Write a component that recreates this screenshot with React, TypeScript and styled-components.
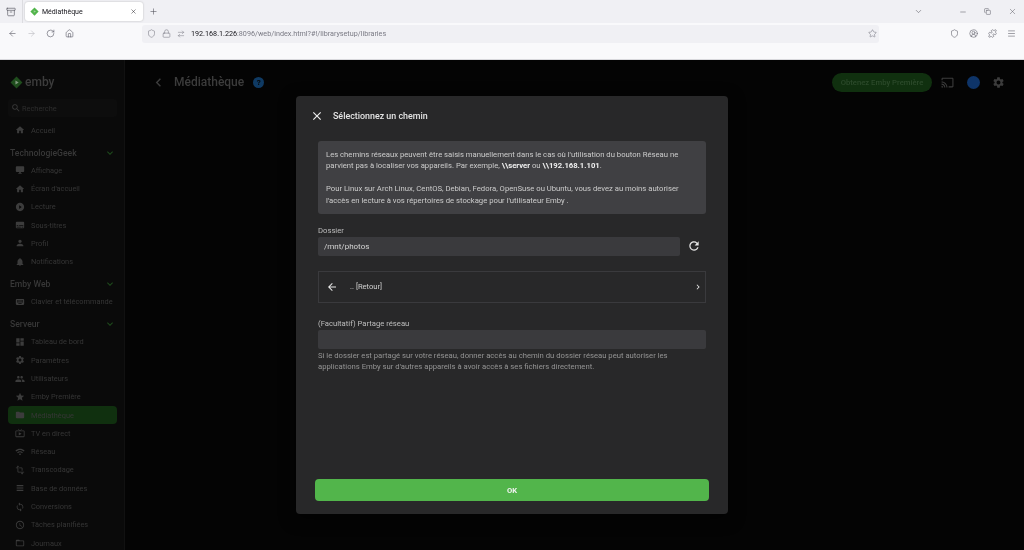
import styled, { createGlobalStyle } from "styled-components";
import {
  Archive, ArrowLeft, ArrowRight, RotateCw, Home, Shield, Lock, ArrowRightLeft, Star, Plus, X,
  ChevronDown, Minus, Copy, CircleUserRound, Puzzle, Menu,
} from "lucide-react";
import {
  MdHome, MdDesktopWindows, MdPlayCircleFilled, MdSubtitles, MdPerson, MdNotifications, MdKeyboard,
  MdDashboard, MdSettings, MdPeople, MdStar, MdFolder, MdLiveTv, MdWifi, MdTransform, MdViewHeadline,
  MdSync, MdSchedule, MdFolderOpen, MdCast, MdSearch, MdChevronLeft, MdChevronRight, MdClose,
  MdRefresh, MdArrowBack, MdKeyboardArrowDown,
} from "react-icons/md";
import type { IconType } from "react-icons";

const Global = createGlobalStyle`
  html, body { margin: 0; height: 100%; overflow: hidden; background: #050505; }
  #root { height: 100%; }
  * { box-sizing: border-box; }
`;

const Page = styled.div`
  position: relative;
  width: 1024px;
  height: 550px;
  display: flex;
  flex-direction: column;
  font-family: Roboto, "Liberation Sans", sans-serif;
  overflow: hidden;
  filter: blur(0.3px);
`;

/* browser chrome */
const TabStrip = styled.div`
  height: 23px;
  background: #f0f0f4;
  display: flex;
  align-items: center;
  color: #50505a;
`;

const TabViews = styled.div`
  width: 23px;
  height: 23px;
  display: flex;
  align-items: center;
  justify-content: center;
  border-right: 1px solid #dcdce0;
`;

const ActiveTab = styled.div`
  width: 118px;
  height: 19px;
  margin-left: 2px;
  padding: 0 6px 0 5px;
  background: #fff;
  border-radius: 3px;
  box-shadow: 0 0 2px rgba(0, 0, 0, 0.25);
  display: flex;
  align-items: center;
  gap: 3px;
  font-size: 7px;
  color: #15141a;
`;

const TabLogo = styled.span`
  display: flex;
  color: #52b54b;
`;

const TabTitle = styled.span`
  flex: 1;
`;

const NewTab = styled.div`
  margin-left: 6px;
  display: flex;
`;

const WindowControls = styled.div`
  margin-left: auto;
  display: flex;
  align-items: center;
  gap: 17px;
  padding-right: 7px;
`;

const ListTabs = styled.div`
  display: flex;
  margin-right: 19px;
`;

const NavBar = styled.div`
  height: 21px;
  background: #f9f9fb;
  display: flex;
  align-items: center;
  padding-left: 8px;
  color: #5b5b66;
`;

const NavButtons = styled.div`
  width: 134px;
  display: flex;
  align-items: center;
  gap: 10px;
`;

const NavIcon = styled.span<{ $off?: boolean }>`
  display: flex;
  opacity: ${({ $off }) => ($off ? 0.4 : 1)};
`;

const UrlBar = styled.div`
  width: 737px;
  height: 18px;
  background: #f0f0f4;
  border-radius: 3px;
  display: flex;
  align-items: center;
  padding: 0 2px 0 5px;
  gap: 6px;
  font-size: 7.2px;
  color: #7a7a84;
`;

const UrlText = styled.span`
  flex: 1;
  white-space: nowrap;
`;

const UrlHost = styled.span`
  color: #15141a;
`;

const NavExtras = styled.div`
  margin-left: auto;
  display: flex;
  align-items: center;
  gap: 10px;
  padding-right: 8px;
`;

const BookmarksBar = styled.div`
  height: 16px;
  background: #f9f9fb;
  border-bottom: 1px solid #d8d8dc;
`;

/* emby page, dimmed behind the dialog */
const Body = styled.div`
  flex: 1;
  min-height: 0;
  display: flex;
  background: #040404;
`;

const Sidebar = styled.aside`
  width: 125px;
  background: #0a0a0a;
  border-right: 1px solid #111;
  padding: 0 7px 0 8px;
  overflow: hidden;
  flex-shrink: 0;
`;

const Brand = styled.div`
  height: 22px;
  margin-top: 11px;
  padding-left: 2px;
  display: flex;
  align-items: center;
  gap: 2px;
  font-size: 12px;
  font-weight: 500;
  color: #3c3c3c;
`;

const BrandMark = styled.span`
  display: flex;
  color: #1f4d1d;
`;

const SearchBox = styled.div`
  height: 18px;
  margin: 6px 0 4px;
  border-radius: 3px;
  background: #0d0d0d;
  display: flex;
  align-items: center;
  gap: 1px;
  padding-left: 3px;
  font-size: 7.4px;
  color: #2e2e2e;
`;

const NavRow = styled.div<{ $active?: boolean }>`
  height: 18.3px;
  display: flex;
  align-items: center;
  gap: 6px;
  padding-left: 7px;
  font-size: 7.4px;
  color: #363636;
  border-radius: 4px;
  white-space: nowrap;
  background: ${({ $active }) => ($active ? "#10300f" : "transparent")};
`;

const Section = styled.div`
  height: 14px;
  margin-top: 6.5px;
  margin-bottom: 1.3px;
  padding: 0 1px 0 2px;
  display: flex;
  align-items: center;
  justify-content: space-between;
  font-size: 8.6px;
  font-weight: 500;
  color: #383838;
  white-space: nowrap;
`;

const SectionChevron = styled.span`
  display: flex;
  color: #1e4a1c;
`;

const Main = styled.main`
  flex: 1;
  min-width: 0;
`;

const Header = styled.header`
  height: 44px;
  display: flex;
  align-items: center;
  padding: 0 19px 0 25px;
  color: #3c3c3c;
`;

const PageTitle = styled.h1`
  margin: 0 0 0 7px;
  font-size: 12px;
  font-weight: 500;
  color: #3c3c3c;
`;

const HelpBadge = styled.span`
  width: 11px;
  height: 11px;
  margin-left: 9px;
  border-radius: 50%;
  background: #0f3a63;
  color: #050505;
  font-size: 8px;
  font-weight: 700;
  display: flex;
  align-items: center;
  justify-content: center;
`;

const HeaderEnd = styled.div`
  margin-left: auto;
  display: flex;
  align-items: center;
  gap: 10px;
`;

const Premium = styled.div`
  height: 19px;
  width: 100px;
  border-radius: 10px;
  background: #10300f;
  color: #2c4a2b;
  font-size: 7.7px;
  font-weight: 500;
  display: flex;
  align-items: center;
  justify-content: center;
  margin-right: -1px;
`;

const Avatar = styled.span`
  width: 13px;
  height: 13px;
  border-radius: 50%;
  background: #0e3468;
  margin: 0 2px 0 3px;
`;

/* dialog */
const Dialog = styled.section`
  position: absolute;
  left: 296px;
  top: 96px;
  width: 432px;
  height: 418px;
  background: #282829;
  border-radius: 4px;
  box-shadow: 0 4px 16px rgba(0, 0, 0, 0.6);
  display: flex;
  flex-direction: column;
  padding: 0 22px 13px;
  color: #d6d6d6;
  font-size: 7.6px;
`;

const DialogHeader = styled.div`
  height: 39px;
  display: flex;
  align-items: center;
  gap: 9px;
  margin-left: -8px;
  margin-bottom: 6px;
  color: #eee;
`;

const DialogTitle = styled.h2`
  margin: 0;
  font-size: 8.9px;
  font-weight: 500;
  color: #e4e4e4;
`;

const InfoBox = styled.div`
  flex: 0 0 73px;
  background: #404043;
  border-radius: 3px;
  padding: 7.5px 8px;
  line-height: 11.6px;
  color: #cccccc;
  font-size: 7.7px;
  white-space: nowrap;
`;

const InfoLine = styled.p<{ $gap?: boolean }>`
  margin: ${({ $gap }) => ($gap ? "11.6px 0 0" : "0")};
`;

const InfoStrong = styled.strong`
  color: #efefef;
`;

const Label = styled.div<{ $top: number }>`
  margin-top: ${({ $top }) => $top}px;
  margin-bottom: 1px;
  font-size: 7.7px;
  line-height: 10px;
  color: #bdbdbd;
`;

const PathRow = styled.div`
  display: flex;
  align-items: center;
`;

const Field = styled.div`
  flex: 1 0 19px;
  height: 19px;
  background: #3a3a3d;
  border-radius: 2px;
  padding: 0 6px;
  display: flex;
  align-items: center;
  font-size: 8px;
  color: #d4d4d4;
`;

const ShareField = styled(Field)`
  flex: 0 0 19px;
`;

const RefreshButton = styled.span`
  width: 26px;
  padding-left: 7px;
  display: flex;
  color: #e6e6e6;
`;

const BackRow = styled.div`
  margin-top: 15px;
  flex: 0 0 32px;
  border: 1px solid #3a3a3d;
  display: flex;
  align-items: center;
  padding: 0 2.5px 0 7px;
  color: #e8e8e8;
  font-size: 7.6px;
`;

const BackLabel = styled.span`
  flex: 1;
  margin-left: 12px;
  color: #cfcfcf;
`;

const Hint = styled.p`
  margin: 1px 0 0;
  line-height: 11.6px;
  font-size: 7.7px;
  color: #949494;
  white-space: nowrap;
`;

const OkButton = styled.button`
  margin: auto -3px 0;
  flex: 0 0 22px;
  border: none;
  border-radius: 4px;
  background: #52b54b;
  color: #f2f2f2;
  font-family: inherit;
  font-size: 7.6px;
  font-weight: 700;
`;

type NavItem = { icon: IconType; label: string; active?: boolean };

const tech: NavItem[] = [
  { icon: MdDesktopWindows, label: "Affichage" },
  { icon: MdHome, label: "Écran d'accueil" },
  { icon: MdPlayCircleFilled, label: "Lecture" },
  { icon: MdSubtitles, label: "Sous-titres" },
  { icon: MdPerson, label: "Profil" },
  { icon: MdNotifications, label: "Notifications" },
];

const server: NavItem[] = [
  { icon: MdDashboard, label: "Tableau de bord" },
  { icon: MdSettings, label: "Paramètres" },
  { icon: MdPeople, label: "Utilisateurs" },
  { icon: MdStar, label: "Emby Première" },
  { icon: MdFolder, label: "Médiathèque", active: true },
  { icon: MdLiveTv, label: "TV en direct" },
  { icon: MdWifi, label: "Réseau" },
  { icon: MdTransform, label: "Transcodage" },
  { icon: MdViewHeadline, label: "Base de données" },
  { icon: MdSync, label: "Conversions" },
  { icon: MdSchedule, label: "Tâches planifiées" },
  { icon: MdFolderOpen, label: "Journaux" },
];

function Row({ icon: Icon, label, active }: NavItem) {
  return (
    <NavRow $active={active}>
      <Icon size={10} color="#3c3c3c" />
      {label}
    </NavRow>
  );
}

function EmbyLogo({ size }: { size: number }) {
  return (
    <svg width={size} height={size} viewBox="0 0 24 24">
      <path d="M12 1 23 12 12 23 1 12Z" fill="currentColor" />
      <path d="M10 8.5 16 12 10 15.5Z" fill="#e8e8e8" fillOpacity={0.5} />
    </svg>
  );
}

function SectionTitle({ label }: { label: string }) {
  return (
    <Section>
      {label}
      <SectionChevron>
        <MdKeyboardArrowDown size={12} />
      </SectionChevron>
    </Section>
  );
}

export default function App() {
  return (
    <Page>
      <Global />
      <TabStrip>
        <TabViews>
          <Archive size={10} strokeWidth={1.5} />
        </TabViews>
        <ActiveTab>
          <TabLogo>
            <EmbyLogo size={9} />
          </TabLogo>
          <TabTitle>Médiathèque</TabTitle>
          <X size={7} strokeWidth={1.6} />
        </ActiveTab>
        <NewTab>
          <Plus size={9} strokeWidth={1.5} />
        </NewTab>
        <WindowControls>
          <ListTabs>
            <ChevronDown size={9} strokeWidth={1.4} />
          </ListTabs>
          <Minus size={8} strokeWidth={1.5} />
          <Copy size={7} strokeWidth={1.6} />
          <X size={9} strokeWidth={1.2} />
        </WindowControls>
      </TabStrip>
      <NavBar>
        <NavButtons>
          <NavIcon><ArrowLeft size={9} strokeWidth={1.6} /></NavIcon>
          <NavIcon $off><ArrowRight size={9} strokeWidth={1.6} /></NavIcon>
          <NavIcon><RotateCw size={9} strokeWidth={1.6} /></NavIcon>
          <NavIcon><Home size={9} strokeWidth={1.6} /></NavIcon>
        </NavButtons>
        <UrlBar>
          <Shield size={9} strokeWidth={1.5} />
          <Lock size={9} strokeWidth={1.5} />
          <ArrowRightLeft size={8} strokeWidth={1.5} />
          <UrlText>
            <UrlHost>192.168.1.226</UrlHost>:8096/web/index.html?#!/librarysetup/libraries
          </UrlText>
          <Star size={9} strokeWidth={1.5} />
        </UrlBar>
        <NavExtras>
          <Shield size={9} strokeWidth={1.5} />
          <CircleUserRound size={9} strokeWidth={1.5} />
          <Puzzle size={9} strokeWidth={1.5} />
          <Menu size={9} strokeWidth={1.5} />
        </NavExtras>
      </NavBar>
      <BookmarksBar />
      <Body>
        <Sidebar>
          <Brand>
            <BrandMark>
              <EmbyLogo size={13} />
            </BrandMark>
            emby
          </Brand>
          <SearchBox>
            <MdSearch size={10} color="#3a3a3a" />
            Recherche
          </SearchBox>
          <Row icon={MdHome} label="Accueil" />
          <SectionTitle label="TechnologieGeek" />
          {tech.map((item) => <Row key={item.label} {...item} />)}
          <SectionTitle label="Emby Web" />
          <Row icon={MdKeyboard} label="Clavier et télécommande" />
          <SectionTitle label="Serveur" />
          {server.map((item) => <Row key={item.label} {...item} />)}
        </Sidebar>
        <Main>
          <Header>
            <MdChevronLeft size={17} />
            <PageTitle>Médiathèque</PageTitle>
            <HelpBadge>?</HelpBadge>
            <HeaderEnd>
              <Premium>Obtenez Emby Première</Premium>
              <MdCast size={13} />
              <Avatar />
              <MdSettings size={13} />
            </HeaderEnd>
          </Header>
        </Main>
      </Body>
      <Dialog>
        <DialogHeader>
          <MdClose size={14} />
          <DialogTitle>Sélectionnez un chemin</DialogTitle>
        </DialogHeader>
        <InfoBox>
          <InfoLine>Les chemins réseaux peuvent être saisis manuellement dans le cas où l'utilisation du bouton Réseau ne</InfoLine>
          <InfoLine>
            parvient pas à localiser vos appareils. Par exemple, <InfoStrong>\\server</InfoStrong> ou <InfoStrong>\\192.168.1.101</InfoStrong>.
          </InfoLine>
          <InfoLine $gap>Pour Linux sur Arch Linux, CentOS, Debian, Fedora, OpenSuse ou Ubuntu, vous devez au moins autoriser</InfoLine>
          <InfoLine>l'accès en lecture à vos répertoires de stockage pour l'utilisateur Emby .</InfoLine>
        </InfoBox>
        <Label $top={11.5}>Dossier</Label>
        <PathRow>
          <Field>/mnt/photos</Field>
          <RefreshButton>
            <MdRefresh size={14} />
          </RefreshButton>
        </PathRow>
        <BackRow>
          <MdArrowBack size={12} />
          <BackLabel>.. [Retour]</BackLabel>
          <MdChevronRight size={10} />
        </BackRow>
        <Label $top={16}>(Facultatif) Partage réseau</Label>
        <ShareField />
        <Hint>
          Si le dossier est partagé sur votre réseau, donner accès au chemin du dossier réseau peut autoriser les
          <br />
          applications Emby sur d'autres appareils à avoir accès à ses fichiers directement.
        </Hint>
        <OkButton>OK</OkButton>
      </Dialog>
    </Page>
  );
}
